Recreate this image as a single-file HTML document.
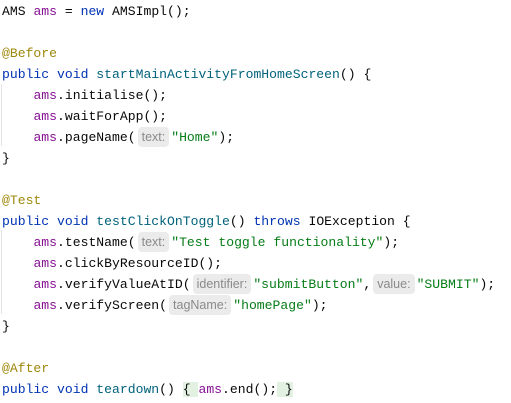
<html><head><style>
body{margin:0;background:#fff;width:511px;height:403px;overflow:hidden}
pre{margin:0;padding:1px 0 0 2px;font-family:"Liberation Mono",monospace;font-size:13.1px;line-height:21px;color:#080808}
.k{color:#0033b3}.f{color:#00627a}.v{color:#871094}.s{color:#067d17}.a{color:#9e880d}
.h{font-family:"Liberation Sans",sans-serif;font-size:12.5px;line-height:12px;color:#8a8a8a;background:#ebebeb;border-radius:4px;padding:3px 4px;margin:0 2px 0 2px}
.b{background:#e2f1e2}
.g{position:absolute;left:1px;width:1px;background:#e4e4e4}
</style></head><body>
<div class="g" style="top:84px;height:62px"></div>
<div class="g" style="top:230px;height:84px"></div>
<pre><span>AMS </span><span class="v">ams</span> = <span class="k">new</span> AMSImpl();

<span class="a">@Before</span>
<span class="k">public void</span> <span class="f">startMainActivityFromHomeScreen</span>() {
    <span class="v">ams</span>.initialise();
    <span class="v">ams</span>.waitForApp();
    <span class="v">ams</span>.pageName(<span class="h">text:</span><span class="s">"Home"</span>);
}

<span class="a">@Test</span>
<span class="k">public void</span> <span class="f">testClickOnToggle</span>() <span class="k">throws</span> IOException {
    <span class="v">ams</span>.testName(<span class="h">text:</span><span class="s">"Test toggle functionality"</span>);
    <span class="v">ams</span>.clickByResourceID();
    <span class="v">ams</span>.verifyValueAtID(<span class="h">identifier:</span><span class="s">"submitButton"</span>,<span class="h">value:</span><span class="s">"SUBMIT"</span>);
    <span class="v">ams</span>.verifyScreen(<span class="h">tagName:</span><span class="s">"homePage"</span>);
}

<span class="a">@After</span>
<span class="k">public void</span> <span class="f">teardown</span>() <span class="b">{ </span><span class="v">ams</span>.end();<span class="b"> }</span>
</pre></body></html>
